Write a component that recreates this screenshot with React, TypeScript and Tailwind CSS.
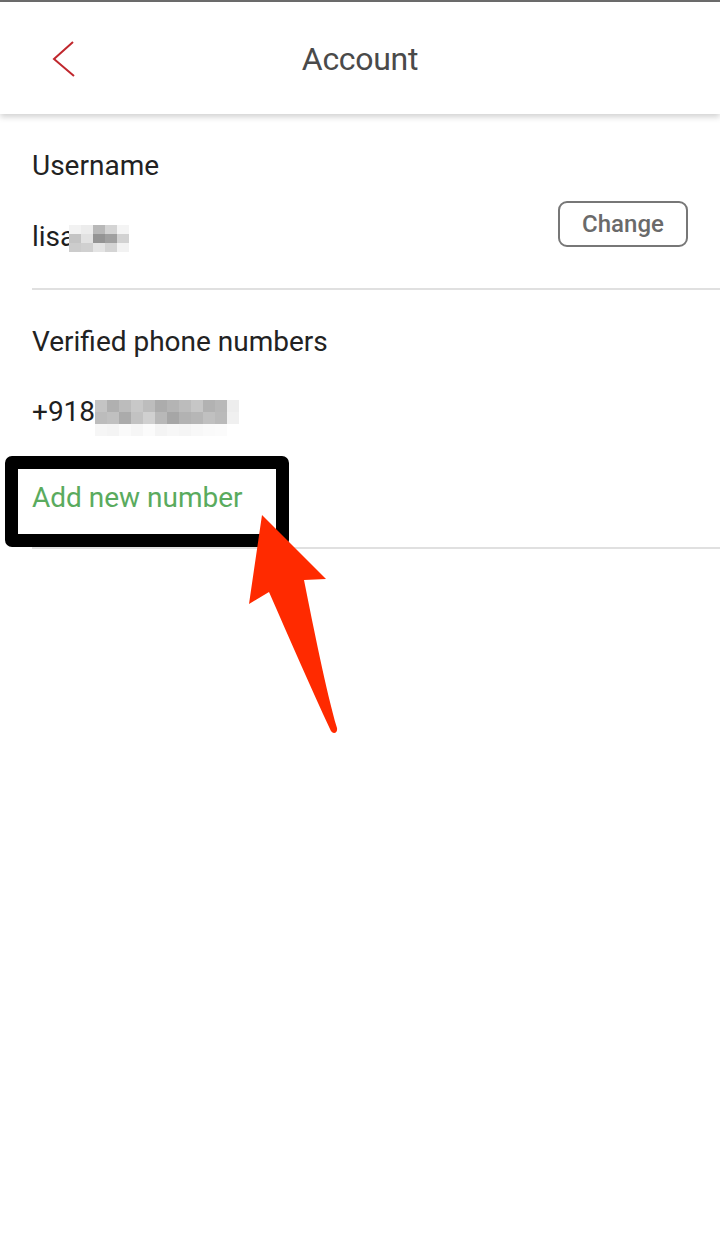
import React from "react";

const font = { fontFamily: "Roboto, 'Noto Sans', sans-serif" };

// pixelated blur patches, drawn as small grey cells
const nameCells = [
  ["#f2f2f2", "#ececec", "#b8b8b8", "#d4d4d4", "#f4f4f4"],
  ["#c4c4c4", "#e2e2e2", "#949494", "#a0a0a0", "#d2d2d2"],
  ["#cccccc", "#d0d0d0", "#e4e4e4", "#d4d4d4", "#f2f2f2"],
];

const phoneCells = [
  ["#c4c4c4", "#b0b0b0", "#bcbcbc", "#c8c8c8", "#bdbdbd", "#acacac", "#b4b4b4", "#bcbcbc", "#c6c6c6", "#b2b2b2", "#b8b8b8", "#ededed"],
  ["#bcbcbc", "#c0c0c0", "#ababab", "#c2c2c2", "#d0d0d0", "#b8b8b8", "#a6a6a6", "#b2b2b2", "#b6b6b6", "#c0c0c0", "#bababa", "#f0f0f0"],
  ["#f6f6f6", "#f4f4f4", "#fafafa", "#f6f6f6", "#fbfbfb", "#f4f4f4", "#f7f7f7", "#f5f5f5", "#f8f8f8", "#fafafa", "#fbfbfb", "#ffffff"],
];

const Pixels = ({ cells, w, h }: { cells: string[][]; w: number; h: number }) => (
  <svg width={cells[0].length * w} height={cells.length * h} className="block">
    {cells.map((row, r) =>
      row.map((c, i) => <rect key={`${r}-${i}`} x={i * w} y={r * h} width={w} height={h} fill={c} />)
    )}
  </svg>
);

const App = () => {
  return (
    <div className="relative w-[720px] h-[1234px] bg-white overflow-hidden" style={font}>
      <div className="h-[2px] bg-[#6d6d6d]" />
      <header className="relative h-[112px] flex items-center justify-center bg-white shadow-[0_3px_6px_rgba(0,0,0,0.18)]">
        <svg className="absolute left-[50px] top-[37px]" width="28" height="40" viewBox="0 0 28 40">
          <path d="M23 3 L4 20 L24 37" fill="none" stroke="#c0272d" strokeWidth="2" />
        </svg>
        <h1 className="text-[32px] leading-[40px] text-[#4a4a4a] tracking-[-0.3px] pt-[2px]">Account</h1>
      </header>

      <section className="pl-[32px]">
        <div className="pr-[32px] pt-[36px] pb-[35px] border-b-2 border-[#e0e0e0] flex items-end justify-between">
          <div className="flex flex-col">
            <span className="text-[28px] leading-[32px] text-[#222]">Username</span>
            <div className="mt-[39px] flex items-center">
              <span className="text-[28px] leading-[32px] text-[#1f1f1f]">lisa</span>
              <div className="-ml-[6px] mt-[3px]">
                <Pixels cells={nameCells} w={12} h={9} />
              </div>
            </div>
          </div>
          <button className="mb-[6px] w-[130px] h-[46px] rounded-[9px] border-2 border-[#777] text-[24px] font-medium text-[#6a6a6a]">
            Change
          </button>
        </div>

        <div className="pt-[36px] pb-[33px] border-b-2 border-[#e0e0e0]">
          <span className="block text-[28px] leading-[32px] text-[#222]">Verified phone numbers</span>
          <div className="mt-[38px] flex items-center h-[32px]">
            <span className="text-[28px] leading-[32px] text-[#1f1f1f]">+918</span>
            <div className="mt-[12px]">
              <Pixels cells={phoneCells} w={12} h={12} />
            </div>
          </div>
          <span className="block mt-[54px] text-[28px] leading-[32px] text-[#5aab5e]">Add new number</span>
        </div>
      </section>

      {/* annotation */}
      <div className="absolute left-[5px] top-[456px] w-[284px] h-[91px] border-[13px] border-black rounded-[7px]" />
      <svg className="absolute left-0 top-0 pointer-events-none" width="720" height="1234">
        <path
          d="M262 515 L326 579 L304 580 C314 630 326 690 337 728 C338 734 332 735 330 729 C312 690 290 640 269 592 L249 604 Z"
          fill="#ff2a00"
        />
      </svg>
    </div>
  );
};

export default App;
